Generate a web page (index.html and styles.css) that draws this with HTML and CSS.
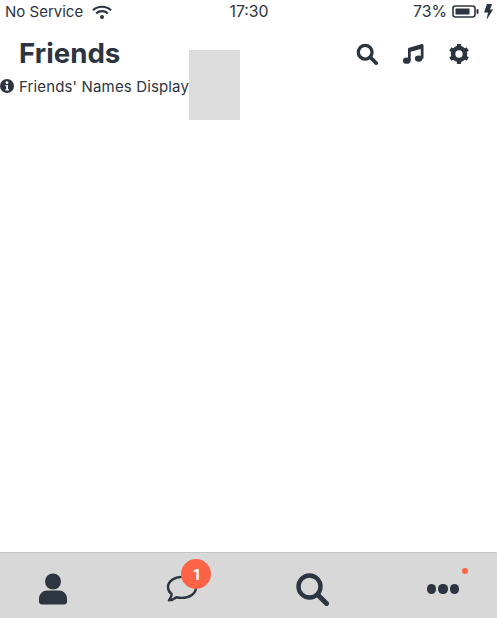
FILE: index.html
```html
<!DOCTYPE html>
<html lang="en">
<head>
  <meta charset="UTF-8" />
  <meta name="viewport" content="width=device-width, initial-scale=1.0"/>
  <title>Friends</title>
  <link rel="stylesheet" href="styles.css">
</head>
<body>
  <div class="app">
    <div class="status-bar">
      <div class="status-left">
        <span>No Service</span>
        <svg class="wifi" viewBox="0 0 20 14" width="20" height="14">
          <path d="M1 5.2C6 .6 14 .6 19 5.2M4.2 8.3c3.3-2.9 8.3-2.9 11.6 0" fill="none" stroke="#2c3540" stroke-width="2.2"/>
          <circle cx="10" cy="12" r="2" fill="#2c3540"/>
        </svg>
      </div>
      <span class="status-num">17:30</span>
      <div class="status-right">
        <span class="status-num">73%</span>
        <svg class="battery" viewBox="0 0 27 13" width="27" height="13">
          <rect x="1" y="1" width="22" height="11" rx="2.5" fill="none" stroke="#2c3540" stroke-width="1.6"/>
          <rect x="3.5" y="3.5" width="14" height="6" fill="#2c3540"/>
          <rect x="24.5" y="4" width="2" height="5" rx="1" fill="#2c3540"/>
        </svg>
        <svg class="bolt" viewBox="0 0 9 16" width="9" height="16">
          <path d="M3 0h5L6 5.600h3L2.500 16l1.500-7.600H0z" fill="#2c3540"/>
        </svg>
      </div>
    </div>

    <div class="page-head">
      <h1>Friends</h1>
      <div class="head-actions">
        <svg viewBox="0 0 24 24" width="22" height="22"><circle cx="10" cy="10" r="7.500" fill="none" stroke="#2c3540" stroke-width="3.600"/><path d="M16 16l6 6" stroke="#2c3540" stroke-width="4" stroke-linecap="round"/></svg>
        <svg viewBox="0 0 24 24" width="22" height="22"><path d="M8 19V6.500L22 2.500V17" fill="none" stroke="#2c3540" stroke-width="3" stroke-linejoin="round"/><path d="M8 8.500L22 4.500" stroke="#2c3540" stroke-width="3"/><ellipse cx="5.200" cy="19.300" rx="4.200" ry="3.400" fill="#2c3540"/><ellipse cx="18.200" cy="17" rx="4.200" ry="3.400" fill="#2c3540"/></svg>
        <svg viewBox="0 0 24 24" width="22" height="22"><circle cx="12" cy="12" r="6.500" fill="none" stroke="#2c3540" stroke-width="5"/><path d="M12 1v22M2.500 6.500l19 11M2.500 17.500l19-11" stroke="#2c3540" stroke-width="4.600" stroke-dasharray="5 12 5"/></svg>
      </div>
    </div>

    <div class="notice">
      <svg viewBox="0 0 14 14" width="14" height="14"><circle cx="7" cy="7" r="7" fill="#2c3540"/><circle cx="7" cy="3.700" r="1.400" fill="#fff"/><path d="M5.400 6h2.600v4.200h1v1.300H5.300v-1.300h1V7.300h-.9z" fill="#fff"/></svg>
      <span>Friends' Names Display</span>
    </div>
    <div class="placeholder-box"></div>

    <div class="content"></div>

    <nav class="tab-bar">
      <svg viewBox="0 0 28 32" width="28" height="32"><circle cx="14" cy="8.500" r="8" fill="#2c3540"/><path d="M0 26c0-5.500 4-8.500 8-8.500h12c4 0 8 3 8 8.500v2.500c0 1.800-1.200 3-3 3H3c-1.800 0-3-1.200-3-3z" fill="#2c3540"/></svg>
      <span class="chat-wrap">
        <svg viewBox="0 0 34 30" width="32" height="28"><path d="M17 2C9 2 2 6.500 2 13c0 3 1.600 5.600 4 7.500-.3 2.300-1.300 4.300-3 6.500 3.200-.2 6-1.500 8-3.200 2 .5 4 .7 6 .7 8 0 15-4.500 15-11.500S25 2 17 2z" fill="none" stroke="#2c3540" stroke-width="2.600" stroke-linejoin="round"/></svg>
        <span class="badge">1</span>
      </span>
      <svg viewBox="0 0 33 33" width="33" height="33"><circle cx="13.500" cy="13.500" r="11" fill="none" stroke="#2c3540" stroke-width="4.400"/><path d="M22 22l8.500 8.500" stroke="#2c3540" stroke-width="5" stroke-linecap="round"/></svg>
      <span class="more-wrap">
        <span class="dots"><i></i><i></i><i></i></span>
        <span class="red-dot"></span>
      </span>
    </nav>
  </div>
</body>
</html>
```

FILE: styles.css
```css
* {
  box-sizing: border-box;
}
body {
  margin: 0;
  font-family: 'Inter', 'Liberation Sans', sans-serif;
  background: #fff;
  color: #2c3540;
}
.app {
  position: relative;
  height: 618px;
  display: flex;
  flex-direction: column;
  overflow: hidden;
}
.status-bar {
  height: 23px;
  padding: 0 4px 0 5px;
  display: flex;
  align-items: center;
  justify-content: space-between;
  font-size: 15px;
}
.status-left, .status-right {
  flex: 1;
  display: flex;
  align-items: center;
}
.status-left {
  gap: 9px;
}
.status-right {
  justify-content: flex-end;
  gap: 5px;
}
.status-num {
  font-size: 15.8px;
}
.page-head {
  height: 51px;
  padding: 7px 27px 0 19px;
  display: flex;
  align-items: center;
  justify-content: space-between;
}
h1 {
  margin: 2px 0 0;
  font-size: 27.7px;
  font-weight: 700;
}
.head-actions {
  display: flex;
  gap: 24px;
  margin-top: 3px;
}
.notice {
  height: 24px;
  display: flex;
  align-items: center;
  gap: 5px;
  font-size: 15px;
  letter-spacing: 0.14px;
}
.placeholder-box {
  position: absolute;
  left: 189px;
  top: 50px;
  width: 51px;
  height: 70px;
  background: #dcdcdc;
}
.content {
  flex: 1;
}
.tab-bar {
  height: 66px;
  padding: 7px 38px 0 39px;
  background: #d8d8d8;
  border-top: 1px solid #c4c4c4;
  display: flex;
  align-items: center;
  justify-content: space-between;
}
.chat-wrap, .more-wrap {
  position: relative;
  display: flex;
}
.chat-wrap {
  left: 1px;
}
.badge {
  position: absolute;
  left: 15px;
  top: -16px;
  width: 30px;
  height: 30px;
  border-radius: 50%;
  background: #ff6347;
  color: #fff;
  font-size: 15px;
  font-weight: 700;
  display: flex;
  align-items: center;
  justify-content: center;
}
.dots {
  display: flex;
  gap: 2px;
}
.dots i {
  width: 9.3px;
  height: 9.3px;
  border-radius: 50%;
  background: #2c3540;
}
.red-dot {
  position: absolute;
  right: -9px;
  top: -16px;
  width: 6px;
  height: 6px;
  border-radius: 50%;
  background: #ff6347;
}
```
